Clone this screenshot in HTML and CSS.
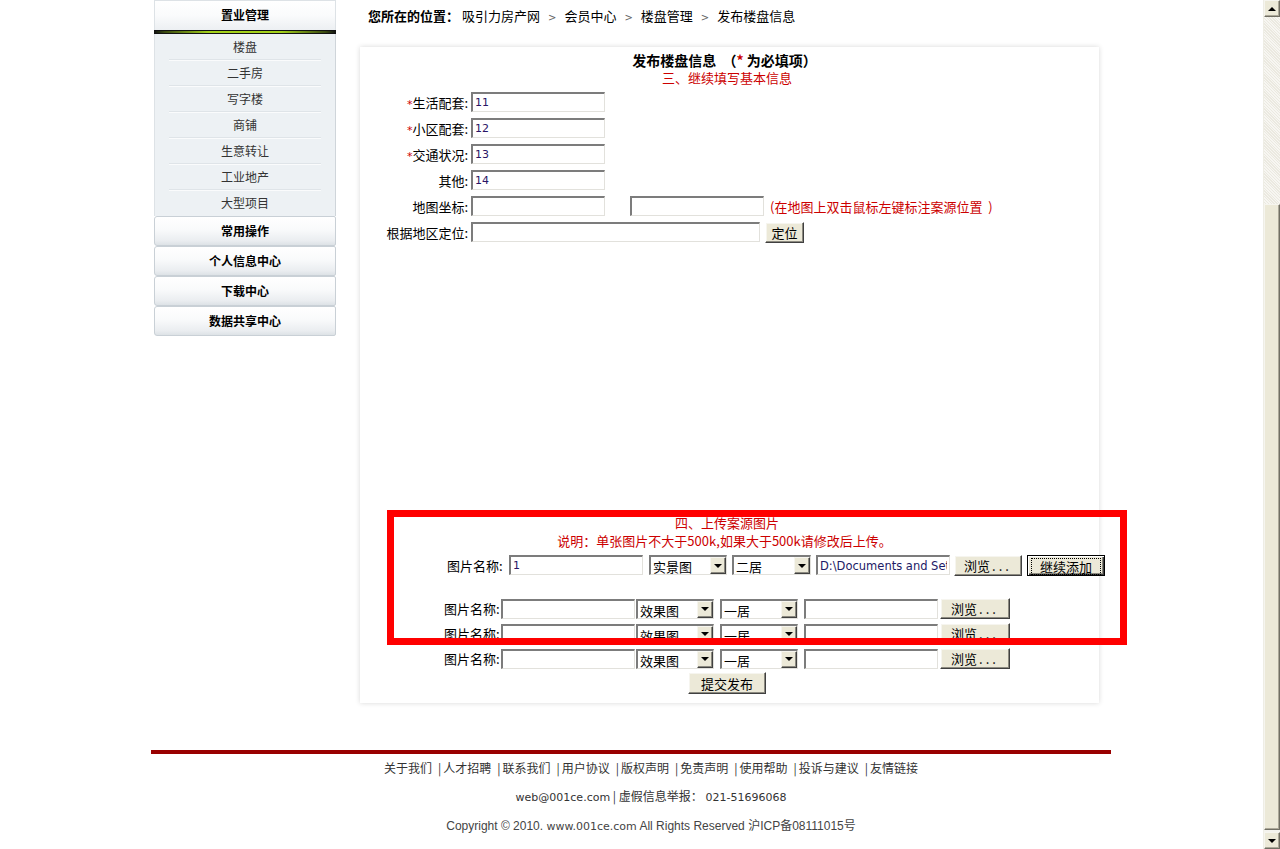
FILE: index.html
```html
<!DOCTYPE html>
<html lang="zh-CN">
<head>
<meta charset="utf-8">
<title>发布楼盘信息</title>
<link rel="stylesheet" href="styles.css">
</head>
<body>
<div class="screen">
  <div class="viewport">
    <div class="wrap">
      <div class="layout">
        <aside class="sidebar">
          <div class="side-head first">置业管理</div>
          <div class="side-line"></div>
          <ul class="side-list">
            <li>楼盘</li>
            <li>二手房</li>
            <li>写字楼</li>
            <li>商铺</li>
            <li>生意转让</li>
            <li>工业地产</li>
            <li class="last">大型项目</li>
          </ul>
          <div class="side-head">常用操作</div>
          <div class="side-head">个人信息中心</div>
          <div class="side-head">下载中心</div>
          <div class="side-head">数据共享中心</div>
        </aside>

        <main class="content">
          <div class="crumb"><b>您所在的位置：</b>吸引力房产网<span class="sep">&gt;</span>会员中心<span class="sep">&gt;</span>楼盘管理<span class="sep">&gt;</span>发布楼盘信息</div>

          <div class="panel">
            <div class="title">发布楼盘信息&nbsp; （<span class="req">*</span> 为必填项）</div>
            <div class="subtitle">三、继续填写基本信息</div>

            <div class="frow first"><label class="flabel"><span class="star">*</span>生活配套:</label><input class="txt" value="11"></div>
            <div class="frow"><label class="flabel"><span class="star">*</span>小区配套:</label><input class="txt" value="12"></div>
            <div class="frow"><label class="flabel"><span class="star">*</span>交通状况:</label><input class="txt" value="13"></div>
            <div class="frow"><label class="flabel">其他:</label><input class="txt" value="14"></div>
            <div class="frow"><label class="flabel">地图坐标:</label><input class="txt" value=""><input class="txt second" value=""><span class="hint">(在地图上双击鼠标左键标注案源位置&nbsp; )</span></div>
            <div class="frow"><label class="flabel">根据地区定位:</label><input class="txt wide" value=""><button class="btn locate">定位</button></div>

            <div class="map"></div>

            <div class="up-title">四、上传案源图片</div>
            <div class="up-note">说明：单张图片不大于500k,如果大于500k请修改后上传。</div>

            <div class="urow first">
              <label class="ulabel">图片名称:</label>
              <input class="txt" value="1">
              <span class="sel s-a"><select><option>实景图</option></select><span class="arrow"><i></i></span></span>
              <span class="sel s-b"><select><option>二居</option></select><span class="arrow"><i></i></span></span>
              <input class="txt file" value="D:\Documents and Settings">
              <button class="btn browse">浏览<span class="dots">...</span></button>
              <button class="btn add focus"><span>继续添加</span></button>
            </div>
            <div class="urow">
              <label class="ulabel">图片名称:</label>
              <input class="txt" value="">
              <span class="sel s-a"><select><option>效果图</option></select><span class="arrow"><i></i></span></span>
              <span class="sel s-b"><select><option>一居</option></select><span class="arrow"><i></i></span></span>
              <input class="txt file" value="">
              <button class="btn browse">浏览<span class="dots">...</span></button>
            </div>
            <div class="urow">
              <label class="ulabel">图片名称:</label>
              <input class="txt" value="">
              <span class="sel s-a"><select><option>效果图</option></select><span class="arrow"><i></i></span></span>
              <span class="sel s-b"><select><option>一居</option></select><span class="arrow"><i></i></span></span>
              <input class="txt file" value="">
              <button class="btn browse">浏览<span class="dots">...</span></button>
            </div>
            <div class="urow">
              <label class="ulabel">图片名称:</label>
              <input class="txt" value="">
              <span class="sel s-a"><select><option>效果图</option></select><span class="arrow"><i></i></span></span>
              <span class="sel s-b"><select><option>一居</option></select><span class="arrow"><i></i></span></span>
              <input class="txt file" value="">
              <button class="btn browse">浏览<span class="dots">...</span></button>
            </div>

            <div class="submit-row"><button class="btn submit">提交发布</button></div>

            <div class="annot"></div>
          </div>
        </main>
      </div>

      <footer class="footer">
        <div class="links">关于我们<span class="bar">|</span>人才招聘<span class="bar">|</span>联系我们<span class="bar">|</span>用户协议<span class="bar">|</span>版权声明<span class="bar">|</span>免责声明<span class="bar">|</span>使用帮助<span class="bar">|</span>投诉与建议<span class="bar">|</span>友情链接</div>
        <div class="contact"><span class="v">web@001ce.com</span> | 虚假信息举报： <span class="v">021-51696068</span></div>
        <div class="copy">Copyright © 2010. <span class="v">www.001ce.com</span> All Rights Reserved 沪ICP备08111015号</div>
      </footer>
    </div>
  </div>

  <div class="scrollbar">
    <div class="sb-btn up"><i></i></div>
    <div class="sb-track"></div>
    <div class="sb-thumb"></div>
    <div class="sb-btn down"><i></i></div>
  </div>
</div>
</body>
</html>
```

FILE: styles.css
```css
html, body {
  margin: 0;
  padding: 0;
  overflow: hidden;
}
body {
  font: 13px "Noto Sans CJK SC", "DejaVu Sans", sans-serif;
  color: #000;
  background: #fff;
}
.screen {
  display: flex;
  height: 849px;
  overflow: hidden;
}
.viewport {
  flex: 1;
  min-width: 0;
}
.wrap {
  width: 960px;
  margin-left: 151px;
}
.layout {
  display: flex;
  align-items: flex-start;
}

/* ---------- sidebar ---------- */
.sidebar {
  width: 182px;
  margin-left: 3px;
  font-size: 12px;
}
.side-head {
  height: 30px;
  box-sizing: border-box;
  line-height: 28px;
  text-align: center;
  font-weight: bold;
  color: #000;
  background: linear-gradient(#ffffff, #f9fafb 45%, #eaedf0 85%, #dde2e6);
  border: 1px solid #c9d0d6;
  border-radius: 3px 2px 2px 3px;
}
.side-head.first {
  border-radius: 0;
  border-color: #dde2e6;
  border-bottom: none;
  line-height: 27px;
  background: linear-gradient(#ffffff, #fafbfc 50%, #eceff2);
}
.side-line {
  height: 4px;
  background: linear-gradient(to right, #111 0, #3a4a10 6%, #a4d21a 30%, #a4d21a 70%, #3a4a10 94%, #111 100%);
  border-top: 1px solid #111;
  border-bottom: 1px solid #111;
  box-sizing: border-box;
}
.side-list {
  list-style: none;
  margin: 0;
  padding: 0;
  background: #edf1f4;
  border-left: 1px solid #dde2e6;
  border-right: 1px solid #cfd5da;
}
.side-list li {
  height: 25px;
  line-height: 25px;
  margin: 0 14px;
  text-align: center;
  color: #333;
  border-bottom: 1px solid #dfe4e8;
  box-shadow: 0 1px 0 #fafbfc;
}
.side-list li.last {
  border-bottom-color: transparent;
  box-shadow: none;
}

/* ---------- content ---------- */
.content {
  margin-left: 24px;
  width: 739px;
}
.crumb {
  height: 32px;
  line-height: 32px;
  padding-left: 8px;
  color: #000;
}
.crumb b {
  margin-right: 3px;
}
.crumb .sep {
  color: #666;
  margin: 0 8px;
  font-family: "DejaVu Sans", sans-serif;
  font-size: 10px;
}
.panel {
  position: relative;
  margin-top: 15px;
  background: #fff;
  box-shadow: 0 0 5px rgba(0, 0, 0, 0.16);
  padding: 4px 0 9px;
}
.title {
  height: 18px;
  line-height: 18px;
  text-align: center;
  font-weight: bold;
  font-size: 14px;
  padding-right: 10px;
}
.req, .star {
  color: #cc0000;
}
.star {
  font-size: 11px;
  font-family: "DejaVu Sans", sans-serif;
}
.subtitle {
  height: 18px;
  line-height: 18px;
  text-align: center;
  color: #cc0000;
  padding-right: 5px;
}
.frow {
  display: flex;
  align-items: center;
  height: 26px;
}
.frow.first {
  margin-top: 2px;
}
.flabel {
  width: 108px;
  text-align: right;
  margin-right: 3px;
}
.txt {
  box-sizing: border-box;
  flex-shrink: 0;
  width: 134px;
  height: 20px;
  margin: 0;
  padding: 0 2px;
  border-style: solid;
  border-width: 2px 1px 1px 2px;
  border-color: #7c7c7c #e2e1dc #e2e1dc #7c7c7c;
  background: #fff;
  font: 11px "DejaVu Sans", sans-serif;
  color: #2a1466;
  outline: none;
}
.txt.file {
  font-size: 11.5px;
  color: #1d1a66;
}
.txt.second {
  margin-left: 25px;
}
.txt.wide {
  width: 289px;
}
.hint {
  margin-left: 6px;
  color: #cc0000;
}
.btn {
  box-sizing: border-box;
  flex-shrink: 0;
  height: 21px;
  margin: 0;
  padding: 0;
  font: 13px "Noto Sans CJK SC", sans-serif;
  line-height: 17px;
  color: #000;
  background: #ece9d8;
  border: 1px solid;
  border-color: #ffffff #404040 #404040 #ffffff;
  box-shadow: inset -1px -1px 0 #8c8a80, inset 1px 1px 0 #f6f5ef;
  cursor: default;
}
.btn.locate {
  width: 39px;
  margin-left: 5px;
}
.map {
  height: 269px;
}
.up-title, .up-note {
  height: 18px;
  line-height: 18px;
  text-align: center;
  color: #cc0000;
}
.up-title {
  padding-right: 5px;
}
.up-note {
  padding-right: 10px;
}
.urow {
  display: flex;
  align-items: center;
  height: 25px;
  padding-left: 84px;
}
.urow > * {
  flex-shrink: 0;
}
.urow .ulabel {
  width: 57px;
}
.urow .sel.s-a {
  margin-left: 1px;
}
.urow .sel.s-b {
  margin-left: 6px;
}
.urow .file {
  margin-left: 6px;
}
.urow .browse {
  width: 70px;
  margin-left: 2px;
}
.urow.first {
  height: 26px;
  margin-top: 2px;
  margin-bottom: 18px;
  padding-left: 87px;
}
.urow.first .ulabel {
  width: 58px;
  margin-right: 4px;
}
.urow.first .sel.s-a {
  margin-left: 6px;
}
.urow.first .sel.s-b {
  margin-left: 5px;
  width: 79px;
}
.urow.first .file {
  margin-left: 5px;
}
.urow.first .browse {
  width: 68px;
  margin-left: 4px;
}
.btn.browse {
  text-align: center;
}
.btn .dots {
  letter-spacing: 3px;
  margin-left: 2px;
}
.btn.add {
  width: 78px;
  margin-left: 5px;
  border-color: #000;
  box-shadow: inset 1px 1px 0 #ffffff, inset -1px -1px 0 #404040, inset -2px -2px 0 #8c8a80;
  padding: 2px 3px;
  height: 21px;
}
.btn.add span {
  display: block;
  height: 15px;
  line-height: 15px;
  border: 1px dotted #000;
}
.sel {
  box-sizing: border-box;
  display: inline-flex;
  align-items: stretch;
  width: 78px;
  height: 20px;
  border-style: solid;
  border-width: 2px 1px 1px 2px;
  border-color: #7c7c7c #e2e1dc #e2e1dc #7c7c7c;
  background: #fff;
}
.sel select {
  flex: 1;
  min-width: 0;
  -webkit-appearance: none;
  appearance: none;
  border: none;
  outline: none;
  background: #fff;
  margin: 0;
  padding: 0 0 0 2px;
  font: 13px "Noto Sans CJK SC", sans-serif;
  color: #000;
}
.sel .arrow {
  box-sizing: border-box;
  width: 16px;
  display: flex;
  align-items: center;
  justify-content: center;
  background: #ece9d8;
  border: 1px solid;
  border-color: #f6f5ef #404040 #404040 #f6f5ef;
  box-shadow: inset -1px -1px 0 #8c8a80;
}
.sel .arrow i, .sb-btn i {
  width: 0;
  height: 0;
  border-left: 4px solid transparent;
  border-right: 4px solid transparent;
  border-top: 4px solid #000;
}
.submit-row {
  display: flex;
  justify-content: center;
  margin-top: 1px;
  padding-right: 5px;
}
.btn.submit {
  width: 78px;
  height: 22px;
}
.annot {
  position: absolute;
  left: 27px;
  top: 463px;
  width: 740px;
  height: 135px;
  box-sizing: border-box;
  border: 7px solid #ff0000;
  pointer-events: none;
}

/* ---------- footer ---------- */
.footer {
  margin-top: 47px;
  border-top: 4px solid #990000;
  padding-left: 40px;
  text-align: center;
  font-size: 12px;
  line-height: 28px;
  color: #333;
}
.footer .bar {
  margin: 0 2px 0 6px;
}
.footer .v {
  font-family: "DejaVu Sans", sans-serif;
  font-size: 11px;
}
.footer .copy {
  font-family: "Liberation Sans", "Noto Sans CJK SC", sans-serif;
  color: #444;
}

/* ---------- scrollbar ---------- */
.scrollbar {
  width: 17px;
  height: 849px;
  display: flex;
  flex-direction: column;
  background: #f4f3ee;
  border-left: 1px solid #eeede5;
  box-sizing: border-box;
}
.sb-btn {
  height: 17px;
  box-sizing: border-box;
  display: flex;
  align-items: center;
  justify-content: center;
  background: #ece9d8;
  border: 1px solid;
  border-color: #f6f5ef #716f64 #716f64 #f6f5ef;
  box-shadow: inset -1px -1px 0 #aca899;
}
.sb-btn.up i {
  border-top: none;
  border-bottom: 4px solid #000;
}
.sb-track {
  height: 187px;
  background: repeating-linear-gradient(45deg, #f7f6f2 0 1px, #ebe9e0 1px 2px);
}
.sb-thumb {
  flex: 1;
  background: #ece9d8;
  border: 1px solid;
  border-color: #f6f5ef #716f64 #716f64 #f6f5ef;
  box-shadow: inset -1px -1px 0 #aca899;
  margin-bottom: 2px;
}
```
